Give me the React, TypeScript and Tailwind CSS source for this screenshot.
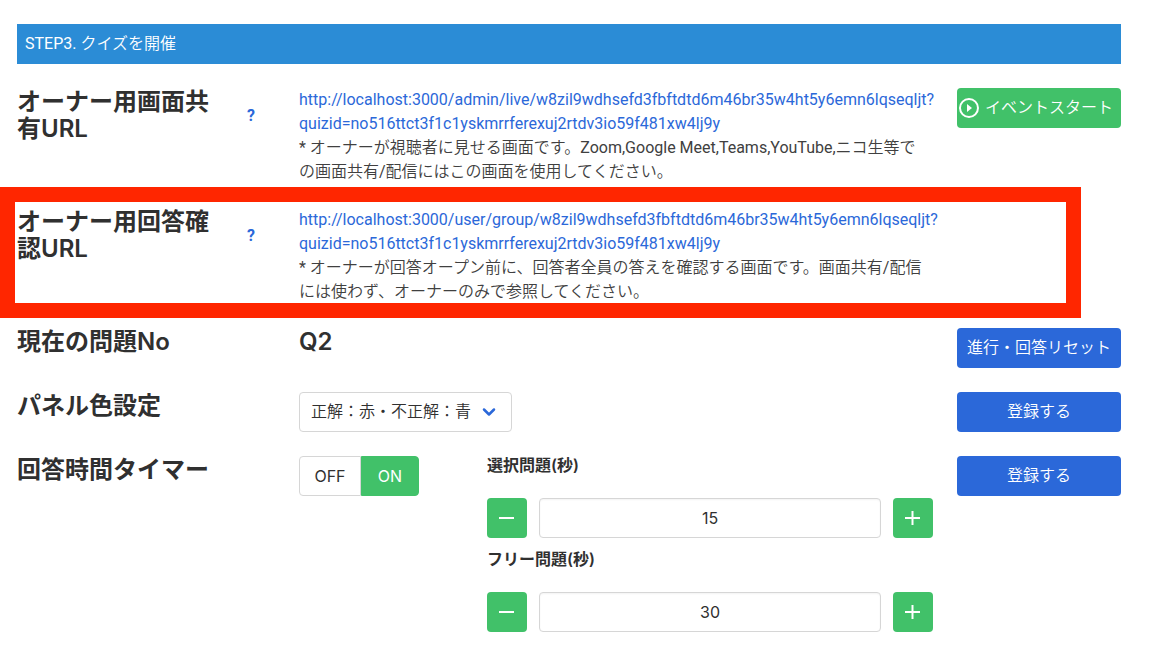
import { useState } from "react";
import type { ReactNode } from "react";

const BODY_FONT = "font-['Roboto','Noto_Sans_CJK_JP_DemiLight','Noto_Sans_CJK_JP',sans-serif]";
const HEADING_FONT = "font-['Inter','Noto_Sans_CJK_JP',sans-serif]";

function Row({
  title,
  help,
  action,
  highlighted,
  children,
}: {
  title: string;
  help?: boolean;
  action?: ReactNode;
  highlighted?: boolean;
  children: ReactNode;
}) {
  return (
    <section className="relative -mx-3 flex">
      <div className="flex w-3/12 shrink-0 items-start gap-3 px-3">
        <h2 className={"flex-1 break-all text-2xl/[27px] font-semibold text-[#303030] " + HEADING_FONT}>{title}</h2>
        {help && (
          <button
            type="button"
            aria-label={title + "のヘルプ"}
            className="mt-2 h-10 w-12 shrink-0 text-base/6 font-bold text-[#2b68d9]"
          >
            ?
          </button>
        )}
      </div>
      <div className="w-7/12 shrink-0 px-3">{children}</div>
      <div className="w-2/12 shrink-0 px-3">{action}</div>
      {highlighted && (
        <div className="pointer-events-none absolute -top-[21px] right-[52px] -bottom-[14px] -left-[5px] border-[15px] border-[#ff2600]" />
      )}
    </section>
  );
}

function ActionButton({ green, children }: { green?: boolean; children: ReactNode }) {
  return (
    <button
      type="button"
      className={
        "flex h-10 w-full items-center justify-center gap-1 rounded whitespace-nowrap text-base/6 text-white " +
        (green ? "bg-[#41c169] pr-2" : "bg-[#2b68d9]")
      }
    >
      {children}
    </button>
  );
}

function UrlBlock({ url, query, note }: { url: string; query: string; note: string }) {
  return (
    <>
      <a href={url + query} className="block text-base/6 whitespace-nowrap text-[#2b68d9]">
        {url}
        <br />
        {query}
      </a>
      <p className="pr-2 text-base/6 text-[#404040]">{note}</p>
    </>
  );
}

function Stepper({ id, label, initial }: { id: string; label: string; initial: number }) {
  const [value, setValue] = useState(initial);
  const button = "flex size-10 shrink-0 items-center justify-center rounded bg-[#41c169] text-white";
  return (
    <div>
      <label htmlFor={id} className={"mb-6 block text-base/[18px] font-semibold text-[#303030] " + HEADING_FONT}>
        {label}
      </label>
      <div className="flex gap-3">
        <button type="button" aria-label="減らす" className={button} onClick={() => setValue(value - 1)}>
          <svg viewBox="0 0 16 16" className="size-4" stroke="currentColor" strokeWidth="2">
            <path d="M0 8h15" />
          </svg>
        </button>
        <input
          id={id}
          inputMode="numeric"
          value={value}
          onChange={(e) => setValue(Number(e.target.value) || 0)}
          className={
            "h-10 w-full min-w-0 rounded border border-[#d6d6d6] px-3 text-center text-base/6 text-[#303030] shadow-[inset_0_1px_2px_rgba(10,10,10,0.05)] " +
            HEADING_FONT
          }
        />
        <button type="button" aria-label="増やす" className={button} onClick={() => setValue(value + 1)}>
          <svg viewBox="0 0 16 16" className="size-4" stroke="currentColor" strokeWidth="2">
            <path d="M0 8h15M7.500 1v14" />
          </svg>
        </button>
      </div>
    </div>
  );
}

export default function App() {
  const [timerOn, setTimerOn] = useState(true);
  const toggle = "h-10 text-base/6";
  const on = "border border-[#41c169] bg-[#41c169] text-white";
  const off = "border border-[#d6d6d6] bg-white text-[#303030]";
  return (
    <main className={"min-h-screen overflow-x-hidden bg-white pt-6 pr-[37px] pb-5 pl-[17px] " + BODY_FONT}>
      <h1 className="mb-6 bg-[#2b8cd6] p-2 text-base/6 text-white">STEP3. クイズを開催</h1>
      <div className="flex flex-col gap-6">
        <Row
          title="オーナー用画面共有URL"
          help
          action={
            <ActionButton green>
              <svg viewBox="0 0 24 24" className="size-6" fill="none" stroke="currentColor" strokeWidth="2">
                <circle cx="12" cy="12" r="9" />
                <path d="M10 8l5 4-5 4z" fill="currentColor" stroke="none" />
              </svg>
              イベントスタート
            </ActionButton>
          }
        >
          <UrlBlock
            url="http://localhost:3000/admin/live/w8zil9wdhsefd3fbftdtd6m46br35w4ht5y6emn6lqseqljt?"
            query="quizid=no516ttct3f1c1yskmrrferexuj2rtdv3io59f481xw4lj9y"
            note="* オーナーが視聴者に見せる画面です。Zoom,Google Meet,Teams,YouTube,ニコ生等での画面共有/配信にはこの画面を使用してください。"
          />
        </Row>
        <Row title="オーナー用回答確認URL" help highlighted>
          <UrlBlock
            url="http://localhost:3000/user/group/w8zil9wdhsefd3fbftdtd6m46br35w4ht5y6emn6lqseqljt?"
            query="quizid=no516ttct3f1c1yskmrrferexuj2rtdv3io59f481xw4lj9y"
            note="* オーナーが回答オープン前に、回答者全員の答えを確認する画面です。画面共有/配信には使わず、オーナーのみで参照してください。"
          />
        </Row>
        <Row title="現在の問題No" action={<ActionButton>進行・回答リセット</ActionButton>}>
          <p className={"text-2xl/[27px] font-semibold text-[#303030] " + HEADING_FONT}>Q2</p>
        </Row>
        <Row title="パネル色設定" action={<ActionButton>登録する</ActionButton>}>
          <div className="relative inline-block align-top">
            <select
              aria-label="パネル色設定"
              className="block h-10 w-[213px] appearance-none rounded border border-[#d6d6d6] bg-white pr-8 pl-[11px] text-base/6 text-[#303030]"
            >
              <option>正解：赤・不正解：青</option>
              <option>正解：青・不正解：赤</option>
            </select>
            <svg
              viewBox="0 0 14 10"
              className="pointer-events-none absolute top-[15px] right-4 h-[10px] w-[14px] text-[#2b68d9]"
              fill="none"
              stroke="currentColor"
              strokeWidth="2.500"
              strokeLinecap="round"
              strokeLinejoin="round"
            >
              <path d="M2 2.500l5 5 5-5" />
            </svg>
          </div>
        </Row>
        <Row title="回答時間タイマー" action={<ActionButton>登録する</ActionButton>}>
          <div className="-mx-3 flex">
            <div className={"flex w-2/7 px-3 " + HEADING_FONT}>
              <button
                type="button"
                aria-pressed={!timerOn}
                onClick={() => setTimerOn(false)}
                className={toggle + " w-[62px] rounded-l " + (timerOn ? off : on)}
              >
                OFF
              </button>
              <button
                type="button"
                aria-pressed={timerOn}
                onClick={() => setTimerOn(true)}
                className={toggle + " w-[58px] rounded-r " + (timerOn ? on : off)}
              >
                ON
              </button>
            </div>
            <div className="flex w-5/7 flex-col gap-3 px-3">
              <Stepper id="choice-seconds" label="選択問題(秒)" initial={15} />
              <Stepper id="free-seconds" label="フリー問題(秒)" initial={30} />
            </div>
          </div>
        </Row>
      </div>
    </main>
  );
}
